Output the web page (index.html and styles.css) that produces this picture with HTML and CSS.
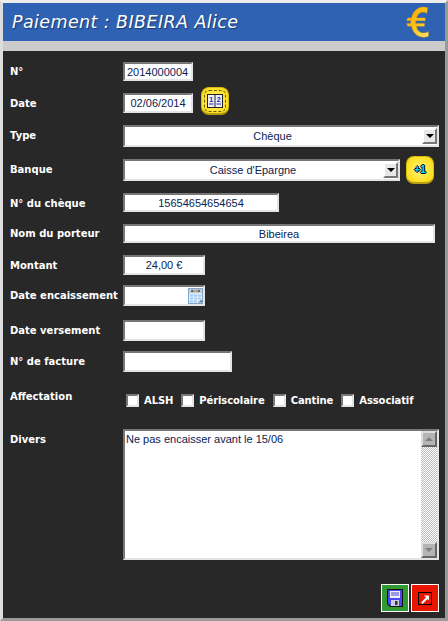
FILE: index.html
```html
<!DOCTYPE html>
<html lang="fr">
<head>
<meta charset="UTF-8">
<meta name="viewport" content="width=device-width, initial-scale=1.0">
<title>Paiement</title>
<link rel="stylesheet" href="styles.css">
</head>
<body>

<div class="window">

  <div class="titlebar">
    <h1>Paiement : BIBEIRA Alice</h1>
    <svg class="euro" width="24" height="33" viewBox="0 0 30 36" preserveAspectRatio="none">
      <defs>
        <linearGradient id="euroGrad" x1="0" y1="0" x2="1" y2="1">
          <stop offset="0" stop-color="#ffa000"/>
          <stop offset="0.5" stop-color="#ffc21a"/>
          <stop offset="1" stop-color="#ffe76a"/>
        </linearGradient>
      </defs>
      <path d="M27 2 C18 -1 9 4 7 13 H2 L1 16 H6 V19 H1 L2 22 H7 C9 32 19 36 28 33 V28 C21 31 14 29 13 22 H23 V19 H12 V16 H24 V13 H13 C15 7 21 5 26 8 Z" fill="url(#euroGrad)" stroke="#e89a00" stroke-width="0.5"/>
    </svg>
  </div>
  <div class="strip"></div>

  <form class="content">
    <div class="row row-no">
      <label>N°</label>
      <input class="field w-70" type="text" value="2014000004">
    </div>

    <div class="row row-date">
      <label>Date</label>
      <input class="field w-70 center" type="text" value="02/06/2014">
      <button class="yellow-btn book" type="button">
        <svg width="16" height="14" viewBox="0 0 16 14">
          <rect x="0" y="0" width="16" height="14" fill="#222"/>
          <rect x="1" y="1" width="6.5" height="12" fill="#eee"/>
          <rect x="8.5" y="1" width="6.5" height="12" fill="#eee"/>
          <text x="4.2" y="8" class="book-num">1</text>
          <text x="11.7" y="8" class="book-num">2</text>
          <rect x="2" y="9.5" width="4.5" height="1" fill="#22c"/>
          <rect x="9.5" y="9.5" width="4.5" height="1" fill="#22c"/>
        </svg>
      </button>
    </div>

    <div class="row row-type">
      <label>Type</label>
      <div class="select w-316">
        <span>Chèque</span>
        <i class="arrow-btn"></i>
      </div>
    </div>

    <div class="row row-banque">
      <label>Banque</label>
      <div class="select w-277">
        <span>Caisse d'Epargne</span>
        <i class="arrow-btn"></i>
      </div>
      <button class="yellow-btn plus" type="button">+1</button>
    </div>

    <div class="row row-cheque">
      <label>N° du chèque</label>
      <input class="field w-156 center" type="text" value="15654654654654">
    </div>

    <div class="row row-porteur">
      <label>Nom du porteur</label>
      <input class="field w-312 center" type="text" value="Bibeirea">
    </div>

    <div class="row row-montant">
      <label>Montant</label>
      <input class="field w-82 center" type="text" value="24,00 €">
    </div>

    <div class="row row-enc">
      <label>Date encaissement</label>
      <div class="field date-field w-82">
        <svg width="15" height="16" viewBox="0 0 15 16">
          <rect x="0.5" y="0.5" width="14" height="15" fill="#dcebf8" stroke="#7fa8cc"/>
          <rect x="1" y="1" width="13" height="4" fill="#c9c9c9"/>
          <path d="M3 3h9M3 3l1.5-1v2zM12 3l-1.5-1v2z" stroke="#555" fill="#555" stroke-width="0.6"/>
          <path d="M2 6.5h3v2h-3zM6 6.5h3v2h-3zM10 6.5h3v2h-3zM2 9.5h3v2h-3zM6 9.5h3v2h-3zM10 9.5h3v2h-3zM2 12.5h3v2h-3zM6 12.5h3v2h-3z" fill="#a9cdf6"/>
          <path d="M10 14.5l4-3v3z" fill="#777"/>
        </svg>
      </div>
    </div>

    <div class="row row-vers">
      <label>Date versement</label>
      <input class="field w-82" type="text">
    </div>

    <div class="row row-fact">
      <label>N° de facture</label>
      <input class="field w-109" type="text">
    </div>

    <div class="row row-aff">
      <label>Affectation</label>
      <div class="checks">
        <label class="check"><i class="box"></i>ALSH</label>
        <label class="check"><i class="box"></i>Périscolaire</label>
        <label class="check"><i class="box"></i>Cantine</label>
        <label class="check"><i class="box"></i>Associatif</label>
      </div>
    </div>

    <div class="row row-divers">
      <label>Divers</label>
      <div class="memo">
        <p>Ne pas encaisser avant le 15/06</p>
        <div class="scrollbar">
          <i class="scroll-btn up"></i>
          <i class="scroll-btn down"></i>
        </div>
      </div>
    </div>

    <div class="actions">
      <button class="action green" type="button">
        <svg width="16" height="18" viewBox="0 0 16 18">
          <path d="M0 0H16V18H3L0 15Z" fill="#111"/>
          <path d="M1 1H15V17H3.5L1 14.5Z" fill="#4a4af0"/>
          <rect x="3" y="2" width="10" height="7" fill="#eef"/>
          <path d="M4 4h8M4 6h8" stroke="#44c" stroke-width="1"/>
          <rect x="4" y="11" width="8" height="6" fill="#ccd"/>
          <rect x="8" y="12" width="2.5" height="4" fill="#333"/>
        </svg>
      </button>
      <button class="action red" type="button">
        <svg width="14" height="13" viewBox="0 0 14 13">
          <rect x="0.5" y="0.5" width="13" height="12" fill="#e81500" stroke="#000"/>
          <path d="M3 10.5L8 5.5L6 3.5H11V8.5L9.5 7L4.5 12Z" fill="#fff"/>
        </svg>
      </button>
    </div>
  </form>

</div>

</body>
</html>
```

FILE: styles.css
```css
html, body {
  margin: 0;
  padding: 0;
  height: 100%;
}

body {
  font-family: "Liberation Sans", Arial, sans-serif;
  background-color: #282828;
  overflow: hidden;
}

.window {
  box-sizing: border-box;
  width: 448px;
  height: 621px;
  border-top: 3px solid #eeeeee;
  border-left: 3px solid #dddddd;
  border-right: 3px solid #999999;
  border-bottom: 3px solid #999999;
  display: flex;
  flex-direction: column;
}

.titlebar {
  height: 38px;
  flex: none;
  background-color: #2f62b3;
  display: flex;
  align-items: center;
  justify-content: space-between;
  padding: 0 15px 0 9px;
}

.titlebar h1 {
  margin: 0;
  font-family: "DejaVu Sans", sans-serif;
  font-size: 17.5px;
  font-style: italic;
  font-weight: normal;
  color: #fff;
  letter-spacing: 0.4px;
  text-shadow: 1px 1px 1px #1a3a70;
}

.strip {
  height: 10px;
  flex: none;
  background-color: #cccccc;
}

.content {
  flex: 1;
  padding: 0 6px 0 7px;
  display: flex;
  flex-direction: column;
}

.row {
  display: flex;
  align-items: center;
  color: #fff;
}

.row > label {
  width: 113px;
  flex: none;
  font-family: "DejaVu Sans", sans-serif;
  font-size: 10px;
  font-weight: bold;
  white-space: nowrap;
}

.row-no { margin-top: 11px; height: 19px; }
.row-date { margin-top: 12px; height: 20px; }
.row-type { margin-top: 12px; height: 22px; }
.row-banque { margin-top: 12px; height: 22px; }
.row-cheque { margin-top: 12px; height: 19px; }
.row-porteur { margin-top: 12px; height: 19px; }
.row-montant { margin-top: 12px; height: 20px; }
.row-enc { margin-top: 10px; height: 21px; }
.row-vers { margin-top: 14px; height: 21px; }
.row-fact { margin-top: 10px; height: 21px; }
.row-aff { margin-top: 17px; height: 20px; }
.row-divers { margin-top: 20px; height: 131px; align-items: flex-start; }
.row-divers > label { margin-top: 5px; }
.row-aff > label { margin-top: -6px; }
.row-cheque > label { margin-top: 1px; }
.row-type > label,
.row-banque > label { margin-top: -2px; }

.field,
.select,
.memo {
  box-sizing: border-box;
  border: 2px solid;
  border-color: #777 #e4e4e4 #e4e4e4 #777;
  background-color: #fff;
  color: #0a2352;
  font-family: "Liberation Sans", Arial, sans-serif;
  font-size: 11px;
  border-radius: 0;
  outline: none;
}

.field {
  height: 100%;
  padding: 0 2px;
  margin: 0;
}

.center {
  text-align: center;
}

.w-70 { width: 70px; }
.w-82 { width: 82px; }
.w-109 { width: 109px; }
.w-156 { width: 156px; }
.w-277 { width: 277px; }
.w-312 { width: 312px; }
.w-316 { width: 316px; }

.date-field {
  display: flex;
  justify-content: flex-end;
  align-items: center;
  padding: 0;
}

.select {
  height: 100%;
  display: flex;
  align-items: center;
}

.select span {
  flex: 1;
  text-align: center;
  padding-right: 2px;
}

.arrow-btn {
  width: 15px;
  height: 16px;
  margin-right: 0;
  box-sizing: border-box;
  background-color: #e8e8e8;
  border: 2px solid;
  border-color: #fff #777 #777 #fff;
  display: flex;
  align-items: center;
  justify-content: center;
}

.arrow-btn::after {
  content: "";
  border-left: 4px solid transparent;
  border-right: 4px solid transparent;
  border-top: 4px solid #000;
}

.yellow-btn {
  box-sizing: border-box;
  width: 28px;
  height: 28px;
  padding: 0;
  margin-left: 6px;
  border: 1px solid #d8bb10;
  border-bottom: 2px solid #b89d10;
  border-radius: 8px;
  background: radial-gradient(circle, #fff48a 0%, #ffe22a 65%, #f6d418 100%);
  display: flex;
  align-items: center;
  justify-content: center;
  cursor: pointer;
}

.plus {
  font-family: "Liberation Sans", sans-serif;
  font-size: 10px;
  font-weight: bold;
  color: #00e5ff;
  text-shadow: 1px 0 0 #000, -1px 0 0 #000, 0 1px 0 #000, 0 -1px 0 #000;
}

.book {
  margin-left: 8px;
  margin-top: -4px;
  outline: 1px dashed #6a5c00;
  outline-offset: -4px;
}

.book-num {
  font-family: "Liberation Sans", sans-serif;
  font-size: 7px;
  font-weight: bold;
  fill: #22c;
  text-anchor: middle;
}

.checks {
  display: flex;
  align-items: center;
  gap: 8px;
  padding-left: 3px;
  margin-top: 3px;
}

.check {
  display: flex;
  align-items: center;
  gap: 5px;
  font-family: "DejaVu Sans", sans-serif;
  font-size: 10px;
  font-weight: bold;
  letter-spacing: -0.1px;
}

.box {
  box-sizing: border-box;
  width: 13px;
  height: 13px;
  background-color: #fff;
  border: 2px solid;
  border-color: #777 #e4e4e4 #e4e4e4 #777;
}

.memo {
  width: 316px;
  height: 100%;
  display: flex;
  justify-content: space-between;
}

.memo p {
  margin: 2px 0 0 1px;
}

.scrollbar {
  width: 16px;
  flex: none;
  display: flex;
  flex-direction: column;
  justify-content: space-between;
  background-color: #ddd;
  background-image: conic-gradient(#bbb 25%, #fff 0 50%, #bbb 0 75%, #fff 0);
  background-size: 2px 2px;
}

.scroll-btn {
  height: 16px;
  box-sizing: border-box;
  background-color: #b4b4b4;
  border: 2px solid;
  border-color: #ddd #666 #666 #ddd;
  display: flex;
  align-items: center;
  justify-content: center;
}

.scroll-btn.up::after {
  content: "";
  border-left: 4px solid transparent;
  border-right: 4px solid transparent;
  border-bottom: 4px solid #808080;
}

.scroll-btn.down::after {
  content: "";
  border-left: 4px solid transparent;
  border-right: 4px solid transparent;
  border-top: 4px solid #808080;
}

.actions {
  margin-top: 24px;
  display: flex;
  justify-content: flex-end;
  gap: 2px;
}

.action {
  box-sizing: border-box;
  width: 28px;
  height: 28px;
  padding: 0;
  border: 1px solid #fff;
  display: flex;
  align-items: center;
  justify-content: center;
  cursor: pointer;
}

.green { background-color: #2f9a2f; }
.red { background-color: #e81500; }
```
